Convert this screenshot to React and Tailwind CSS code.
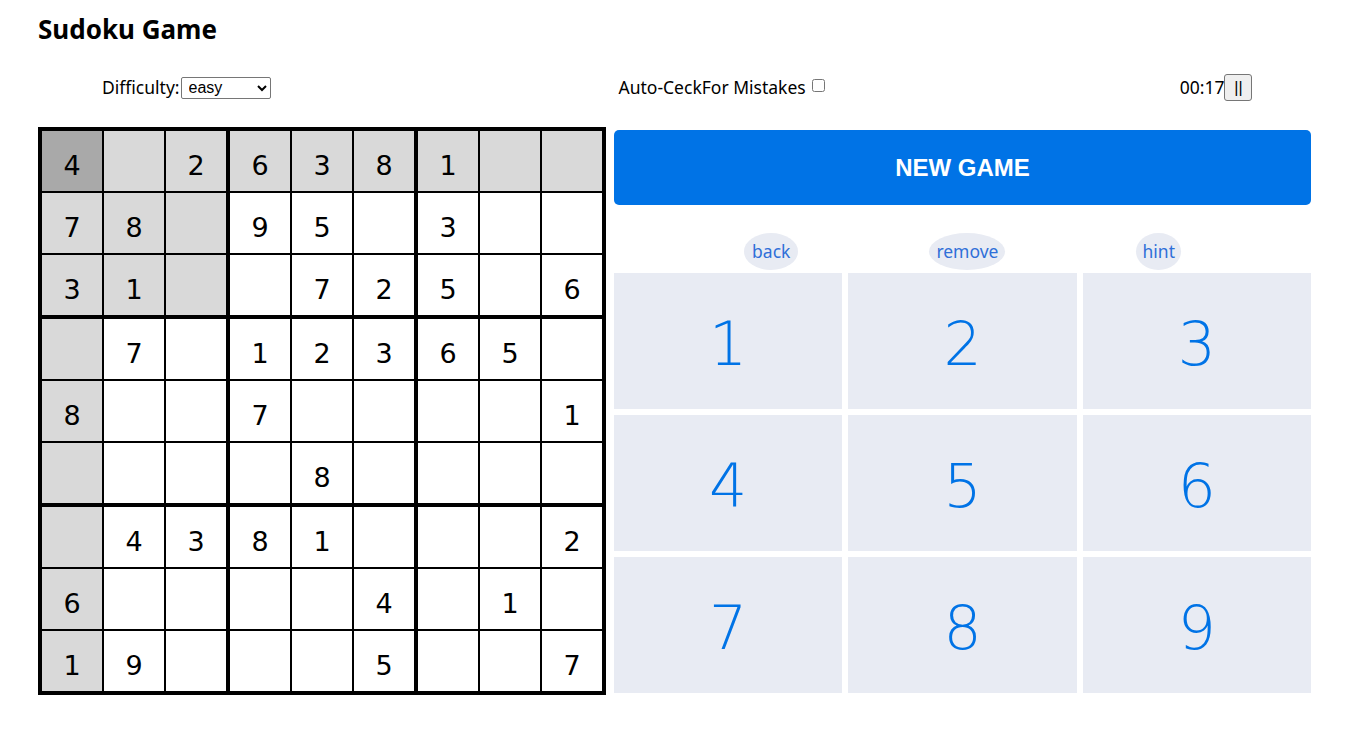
import React from "react";

const board = [
  [4, 0, 2, 6, 3, 8, 1, 0, 0],
  [7, 8, 0, 9, 5, 0, 3, 0, 0],
  [3, 1, 0, 0, 7, 2, 5, 0, 6],
  [0, 7, 0, 1, 2, 3, 6, 5, 0],
  [8, 0, 0, 7, 0, 0, 0, 0, 1],
  [0, 0, 0, 0, 8, 0, 0, 0, 0],
  [0, 4, 3, 8, 1, 0, 0, 0, 2],
  [6, 0, 0, 0, 0, 4, 0, 1, 0],
  [1, 9, 0, 0, 0, 5, 0, 0, 7],
];

function Cell({ r, c, v }) {
  const selected = r === 0 && c === 0;
  const highlighted = r === 0 || c === 0 || (r < 3 && c < 3);
  const bg = selected ? "bg-[#a9a9a9]" : highlighted ? "bg-[#d9d9d9]" : "bg-white";
  const thickR = c === 2 || c === 5;
  const thickB = r === 2 || r === 5;
  const right = thickR ? "border-r-[3px] w-[64px]" : "border-r w-[62px]";
  const bottom = thickB ? "border-b-[3px] h-[64px]" : "border-b h-[62px]";
  return (
    <div
      className={`box-border border-l border-t ${right} ${bottom} border-black ${bg} flex items-center justify-center pt-[8px]`}
    >
      <span className="text-[27px] text-black font-['DejaVu_Sans',sans-serif] leading-none">
        {v ? v : ""}
      </span>
    </div>
  );
}

export default function App() {
  return (
    <div className="min-h-[756px] bg-white font-['Noto_Sans',sans-serif] text-black px-[38px] pt-[13px]">
      <h1 className="text-[26px] font-bold leading-[32px]">Sudoku Game</h1>

      <div className="mt-[29px] h-[27px] flex items-center text-[17.5px]">
        <div className="ml-[64px] flex items-center">
          <span>Difficulty:</span>
          <select
            defaultValue="easy"
            className="ml-[1px] w-[90px] h-[22px] border border-[#767676] rounded-[2px] bg-white text-[16px] leading-none font-['Liberation_Sans',Arial,sans-serif] pl-[3px]"
          >
            <option value="easy">easy</option>
            <option value="medium">medium</option>
            <option value="hard">hard</option>
          </select>
        </div>
        <div className="ml-[348px] flex items-center">
          <span>Auto-CeckFor Mistakes</span>
          <input type="checkbox" className="ml-[6px] mb-[5px] w-[13px] h-[13px]" />
        </div>
        <div className="ml-[355px] flex items-center">
          <span>00:17</span>
          <button className="w-[28px] h-[27px] bg-[#efefef] border border-[#767676] rounded-[3px] text-[16px] leading-none font-['Liberation_Sans',Arial,sans-serif] text-black">
            ||
          </button>
        </div>
      </div>

      <div className="mt-[26px] flex items-start">
        <div className="border-[3px] border-black w-fit">
          <div className="flex flex-col">
            {board.map((row, r) => (
              <div key={r} className="flex">
                {row.map((v, c) => (
                  <Cell key={c} r={r} c={c} v={v} />
                ))}
              </div>
            ))}
          </div>
        </div>

        <div className="ml-[8px] mt-[3px] w-[697px]">
          <button className="w-full h-[75px] rounded-[5px] bg-[#0073e6] text-white text-[24px] font-bold font-['Liberation_Sans',Arial,sans-serif] flex items-center justify-center">
            NEW GAME
          </button>

          <div className="mt-[28px] h-[37px] flex items-center justify-center gap-[131px] text-[17.5px] text-[#2f6fd8]">
            <span className="h-[37px] px-[8px] rounded-[50%] bg-[#e8ebf3] flex items-center">back</span>
            <span className="h-[37px] px-[7px] rounded-[50%] bg-[#e8ebf3] flex items-center">remove</span>
            <span className="h-[37px] px-[6px] rounded-[50%] bg-[#e8ebf3] flex items-center">hint</span>
          </div>

          <div className="mt-[3px] grid grid-cols-3 gap-[6px]">
            {[1, 2, 3, 4, 5, 6, 7, 8, 9].map((n) => (
              <div
                key={n}
                className="h-[136px] pt-[5px] bg-[#e8ebf3] flex items-center justify-center text-[#0073e6] text-[60px] font-extralight font-['DejaVu_Sans',sans-serif] leading-none"
              >
                {n}
              </div>
            ))}
          </div>
        </div>
      </div>
    </div>
  );
}
